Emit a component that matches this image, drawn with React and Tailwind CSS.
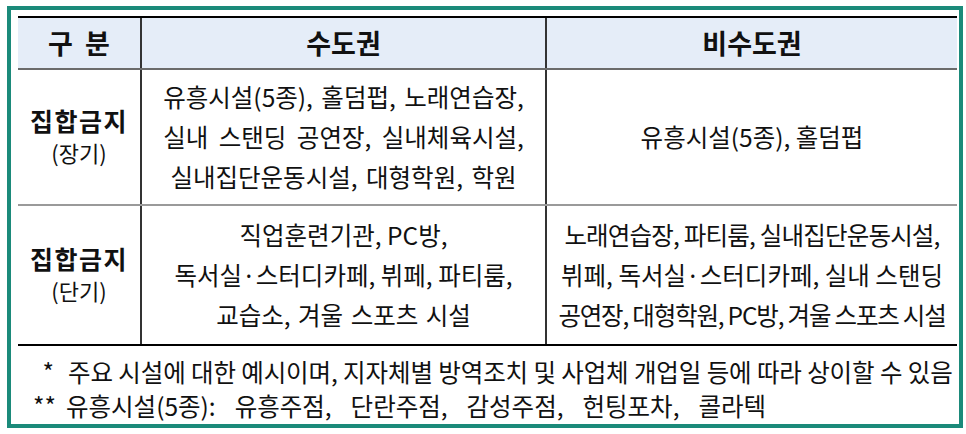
import React from "react";

const font = { fontFamily: '"Noto Sans CJK KR", "Noto Sans", sans-serif' };

function Lines({ lines, className = "" }) {
  return (
    <div className={"flex flex-col items-center justify-center text-[24.5px] leading-[40px] text-[#111] " + className}>
      {lines.map((l, i) => (
        <div key={i} className={"whitespace-pre " + (l.cls || "")}>{l.t}</div>
      ))}
    </div>
  );
}

function Label({ title, sub }) {
  return (
    <div className="flex flex-col items-center justify-center text-[#111] border-r-2 border-[#333]">
      <div className="text-[25px] font-bold leading-[30px] tracking-[1.5px]">{title}</div>
      <div className="text-[22px] leading-[34px]">{sub}</div>
    </div>
  );
}

export default function App() {
  return (
    <div className="w-[966px] h-[434px] bg-white pt-[6px] pl-[7px]" style={font}>
      <div className="w-[956px] h-[422px] border-4 border-[#1b8a7a] pt-[6px] pl-[7px] flex flex-col">
        <div className="w-[939px] border-t-2 border-black">
          {/* header */}
          <div className="grid grid-cols-[124px_405px_410px] h-[52px] bg-[#e5edf8] border-b-2 border-[#6b6b6b] text-[27px] font-bold text-[#111]">
            <div className="flex items-center justify-center border-r-2 border-[#333] whitespace-pre">구  분</div>
            <div className="flex items-center justify-center border-r-2 border-[#333]">수도권</div>
            <div className="flex items-center justify-center">비수도권</div>
          </div>

          {/* 장기 */}
          <div className="grid grid-cols-[124px_405px_410px] h-[136px] border-b-2 border-[#9a9a9a]">
            <Label title="집합금지" sub="(장기)" />
            <Lines
              className="border-r-2 border-[#333]"
              lines={[
                { t: "유흥시설(5종), 홀덤펍, 노래연습장,", cls: "[word-spacing:3px]" },
                { t: "실내 스탠딩 공연장, 실내체육시설,", cls: "[word-spacing:5px]" },
                { t: "실내집단운동시설, 대형학원, 학원", cls: "[word-spacing:3px]" },
              ]}
            />
            <Lines lines={[{ t: "유흥시설(5종), 홀덤펍" }]} />
          </div>

          {/* 단기 */}
          <div className="grid grid-cols-[124px_405px_410px] h-[140px] border-b-2 border-black">
            <Label title="집합금지" sub="(단기)" />
            <Lines
              className="border-r-2 border-[#333]"
              lines={[
                { t: "직업훈련기관, PC방," },
                { t: "독서실·스터디카페, 뷔페, 파티룸," },
                { t: "교습소, 겨울 스포츠 시설", cls: "[word-spacing:2px]" },
              ]}
            />
            <Lines
              lines={[
                { t: "노래연습장, 파티룸, 실내집단운동시설,", cls: "tracking-[-0.8px]" },
                { t: "뷔페, 독서실·스터디카페, 실내 스탠딩" },
                { t: "공연장, 대형학원, PC방, 겨울 스포츠 시설", cls: "tracking-[-1.2px]" },
              ]}
            />
          </div>
        </div>

        {/* notes */}
        <div className="flex-1 flex flex-col justify-center pt-[8px] text-[24.5px] leading-[34px] text-[#111]">
          <div className="flex whitespace-pre">
            <span className="w-[50px] text-right pr-[14px]">*</span>
            <span className="tracking-[-0.1px]">주요 시설에 대한 예시이며, 지자체별 방역조치 및 사업체 개업일 등에 따라 상이할 수 있음</span>
          </div>
          <div className="flex whitespace-pre">
            <span className="w-[48px] pl-[15px]">**</span>
            <span className="[word-spacing:4px]">{"유흥시설(5종):  유흥주점,  단란주점,  감성주점,  헌팅포차,  콜라텍"}</span>
          </div>
        </div>
      </div>
    </div>
  );
}
